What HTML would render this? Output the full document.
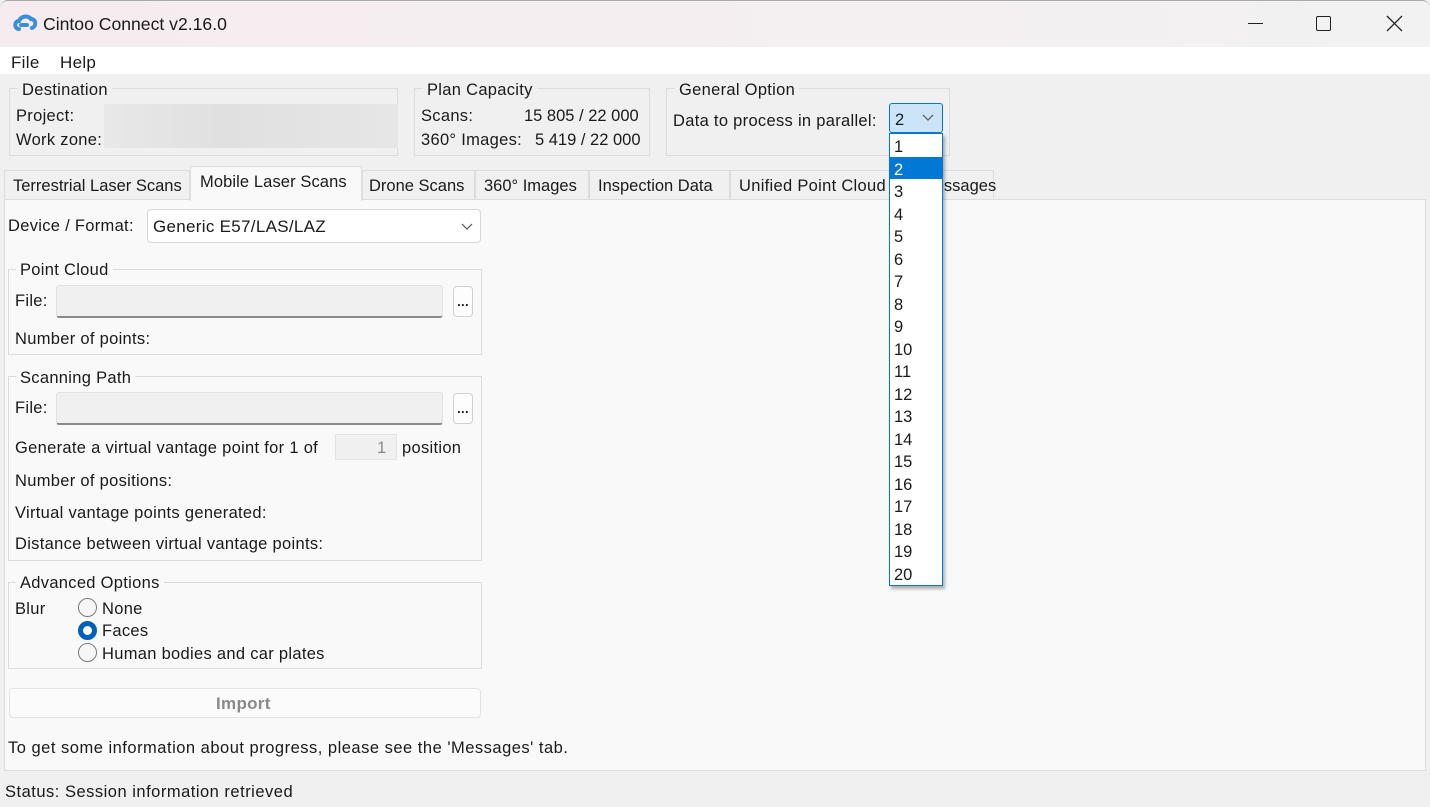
<!DOCTYPE html>
<html><head><meta charset="utf-8"><style>
*{margin:0;padding:0;box-sizing:border-box}
body{width:1430px;height:807px;overflow:hidden;background:#f0f0f0;font-family:"Liberation Sans",sans-serif;font-size:16.5px;letter-spacing:0.3px;color:#1a1a1a;position:relative}
.a{position:absolute}
.t{position:absolute;white-space:nowrap;line-height:20px;margin-top:2px}
.gb{position:absolute;border:1px solid #dcdcdc}
.gt{position:absolute;white-space:nowrap;line-height:20px;padding:0 4px;margin-top:2px}
.in{position:absolute;background:#f0f0f0;border:1px solid #e2e2e2;border-bottom:2px solid #8a8a8a;border-radius:3px}
.btn{position:absolute;background:#fdfdfd;border:1px solid #d0d0d0;border-radius:4px;text-align:center;font-weight:bold;font-size:13px;line-height:30px}
.rad{position:absolute;width:19px;height:19px;border-radius:50%;border:1px solid #7a7a7a;background:#f6f6f6}
</style></head><body>
<div class="a" style="left:0;top:0;width:1430px;height:47px;background:linear-gradient(90deg,#f6ecef 0%,#f4eff1 60%,#f2f2f2 100%);border-top:1px solid #aaa;border-radius:8px 8px 0 0"></div>
<svg class="a" style="left:13px;top:14px" width="24" height="18" viewBox="0 0 24 18"><path d="M6 15 C1 15 1 7 6 7 C8 2 15 1 18 5 C23 5 24 12 19 14" fill="none" stroke="#3a8fdc" stroke-width="4" stroke-linecap="round"/><path d="M8 11 L14 11" stroke="#3a8fdc" stroke-width="4" stroke-linecap="round"/></svg>
<div class="t" style="left:43px;top:12px;font-size:17.6px;letter-spacing:0">Cintoo Connect v2.16.0</div>
<div class="a" style="left:1248px;top:23px;width:15px;height:1px;background:#222"></div>
<div class="a" style="left:1316px;top:16px;width:15px;height:15px;border:1.3px solid #222;border-radius:2px"></div>
<svg class="a" style="left:1386px;top:15px" width="17" height="17"><path d="M1 1L16 16M16 1L1 16" stroke="#222" stroke-width="1.3"/></svg>
<div class="a" style="left:0;top:47px;width:1430px;height:27px;background:#fff"></div>
<div class="t" style="left:11px;top:51px;font-size:17px">File</div>
<div class="t" style="left:60px;top:51px;font-size:17px">Help</div>

<div class="gb" style="left:9px;top:88px;width:389px;height:68px"></div>
<div class="gt" style="left:18px;top:78px;background:#f0f0f0">Destination</div>
<div class="t" style="left:16px;top:104px">Project:</div>
<div class="t" style="left:16px;top:128px">Work zone:</div>
<div class="a" style="left:104px;top:104px;width:294px;height:44px;background:linear-gradient(90deg,#e8e8e8,#e0e0e0 40%,#e6e6e6)"></div>

<div class="gb" style="left:414px;top:88px;width:236px;height:68px"></div>
<div class="gt" style="left:423px;top:78px;background:#f0f0f0">Plan Capacity</div>
<div class="t" style="left:421px;top:104px">Scans:</div>
<div class="t" style="left:524px;top:104px;letter-spacing:0">15 805 / 22 000</div>
<div class="t" style="left:421px;top:128px">360° Images:</div>
<div class="t" style="left:535px;top:128px;letter-spacing:0">5 419 / 22 000</div>

<div class="gb" style="left:666px;top:88px;width:284px;height:68px"></div>
<div class="gt" style="left:675px;top:78px;background:#f0f0f0">General Option</div>
<div class="t" style="left:673px;top:109px">Data to process in parallel:</div>
<div class="a" style="left:889px;top:103px;width:54px;height:30px;background:#cce4f7;border:1px solid #0078d4;border-radius:3px"></div>
<div class="t" style="left:895px;top:108px">2</div>
<svg class="a" style="left:922px;top:114px" width="12" height="8"><path d="M1 1L6 6L11 1" fill="none" stroke="#555" stroke-width="1.2"/></svg>

<!-- tabs -->
<div class="a" style="left:4px;top:199px;width:1422px;height:572px;background:#f9f9f9;border:1px solid #dcdcdc"></div>
<div class="a" style="left:4px;top:170px;width:186px;height:30px;border:1px solid #dcdcdc;background:#f0f0f0"></div>
<div class="t" style="left:13px;top:174px;letter-spacing:0">Terrestrial Laser Scans</div>
<div class="a" style="left:190px;top:166px;width:172px;height:35px;border:1px solid #dcdcdc;border-bottom:none;background:#f9f9f9"></div>
<div class="t" style="left:200px;top:170px;letter-spacing:0.1px">Mobile Laser Scans</div>
<div class="a" style="left:362px;top:170px;width:113px;height:30px;border:1px solid #dcdcdc;background:#f0f0f0"></div>
<div class="t" style="left:369px;top:174px;letter-spacing:0">Drone Scans</div>
<div class="a" style="left:475px;top:170px;width:114px;height:30px;border:1px solid #dcdcdc;background:#f0f0f0"></div>
<div class="t" style="left:484px;top:174px;letter-spacing:0">360° Images</div>
<div class="a" style="left:589px;top:170px;width:141px;height:30px;border:1px solid #dcdcdc;background:#f0f0f0"></div>
<div class="t" style="left:598px;top:174px;letter-spacing:0">Inspection Data</div>
<div class="a" style="left:730px;top:170px;width:264px;height:30px;border:1px solid #dcdcdc;background:#f0f0f0;overflow:hidden"></div>
<div class="t" style="left:739px;top:174px">Unified Point Cloud</div>
<div class="t" style="left:921px;top:174px;letter-spacing:0">Messages</div>

<div class="t" style="left:8px;top:214px">Device / Format:</div>
<div class="a" style="left:147px;top:209px;width:334px;height:34px;background:#fff;border:1px solid #d6d6d6;border-radius:4px"></div>
<div class="t" style="left:153px;top:215px;font-size:17px">Generic E57/LAS/LAZ</div>
<svg class="a" style="left:461px;top:223px" width="12" height="8"><path d="M1 1L6 6L11 1" fill="none" stroke="#555" stroke-width="1.2"/></svg>

<div class="gb" style="left:8px;top:269px;width:474px;height:86px"></div>
<div class="gt" style="left:16px;top:258px;background:#f9f9f9">Point Cloud</div>
<div class="t" style="left:15px;top:289px">File:</div>
<div class="in" style="left:56px;top:285px;width:387px;height:33px"></div>
<div class="btn" style="left:453px;top:286px;width:20px;height:31px">...</div>
<div class="t" style="left:15px;top:327px">Number of points:</div>

<div class="gb" style="left:8px;top:376px;width:474px;height:185px"></div>
<div class="gt" style="left:16px;top:366px;background:#f9f9f9">Scanning Path</div>
<div class="t" style="left:15px;top:396px">File:</div>
<div class="in" style="left:56px;top:392px;width:387px;height:33px"></div>
<div class="btn" style="left:453px;top:393px;width:20px;height:31px">...</div>
<div class="t" style="left:15px;top:436px">Generate a virtual vantage point for 1 of</div>
<div class="a" style="left:335px;top:434px;width:62px;height:26px;background:#f0f0f0;border:1px solid #e4e4e4"></div>
<div class="t" style="left:377px;top:436px;color:#888">1</div>
<div class="t" style="left:402px;top:436px">position</div>
<div class="t" style="left:15px;top:469px">Number of positions:</div>
<div class="t" style="left:15px;top:501px">Virtual vantage points generated:</div>
<div class="t" style="left:15px;top:532px">Distance between virtual vantage points:</div>

<div class="gb" style="left:8px;top:582px;width:474px;height:87px"></div>
<div class="gt" style="left:16px;top:571px;background:#f9f9f9">Advanced Options</div>
<div class="t" style="left:15px;top:597px">Blur</div>
<div class="rad" style="left:78px;top:598px"></div>
<div class="t" style="left:102px;top:597px">None</div>
<div class="rad" style="left:78px;top:621px;border:5px solid #005fb8;background:#fff"></div>
<div class="t" style="left:102px;top:619px">Faces</div>
<div class="rad" style="left:78px;top:643px"></div>
<div class="t" style="left:102px;top:642px">Human bodies and car plates</div>

<div class="a" style="left:9px;top:688px;width:472px;height:30px;border:1px solid #e4e4e4;border-radius:4px;background:#fbfbfb"></div>
<div class="t" style="left:216px;top:692px;color:#8a8a8a;font-weight:bold;font-size:17px">Import</div>
<div class="t" style="left:8px;top:736px;letter-spacing:0.5px">To get some information about progress, please see the 'Messages' tab.</div>

<div class="t" style="left:5px;top:780px;letter-spacing:0.5px">Status: Session information retrieved</div>

<!-- dropdown list -->
<div class="a" style="left:889px;top:133px;width:54px;height:453px;background:#fff;border:1px solid #0078d4;box-shadow:2px 3px 3px rgba(0,0,0,.3)"></div>
<div class="a" style="left:890px;top:157px;width:52px;height:22px;background:#0078d4"></div>
<div class="a" style="left:894px;top:136px;line-height:22.5px;font-size:16.5px;letter-spacing:0">1<br><span style="color:#fff">2</span><br>3<br>4<br>5<br>6<br>7<br>8<br>9<br>10<br>11<br>12<br>13<br>14<br>15<br>16<br>17<br>18<br>19<br>20</div>
</body></html>
